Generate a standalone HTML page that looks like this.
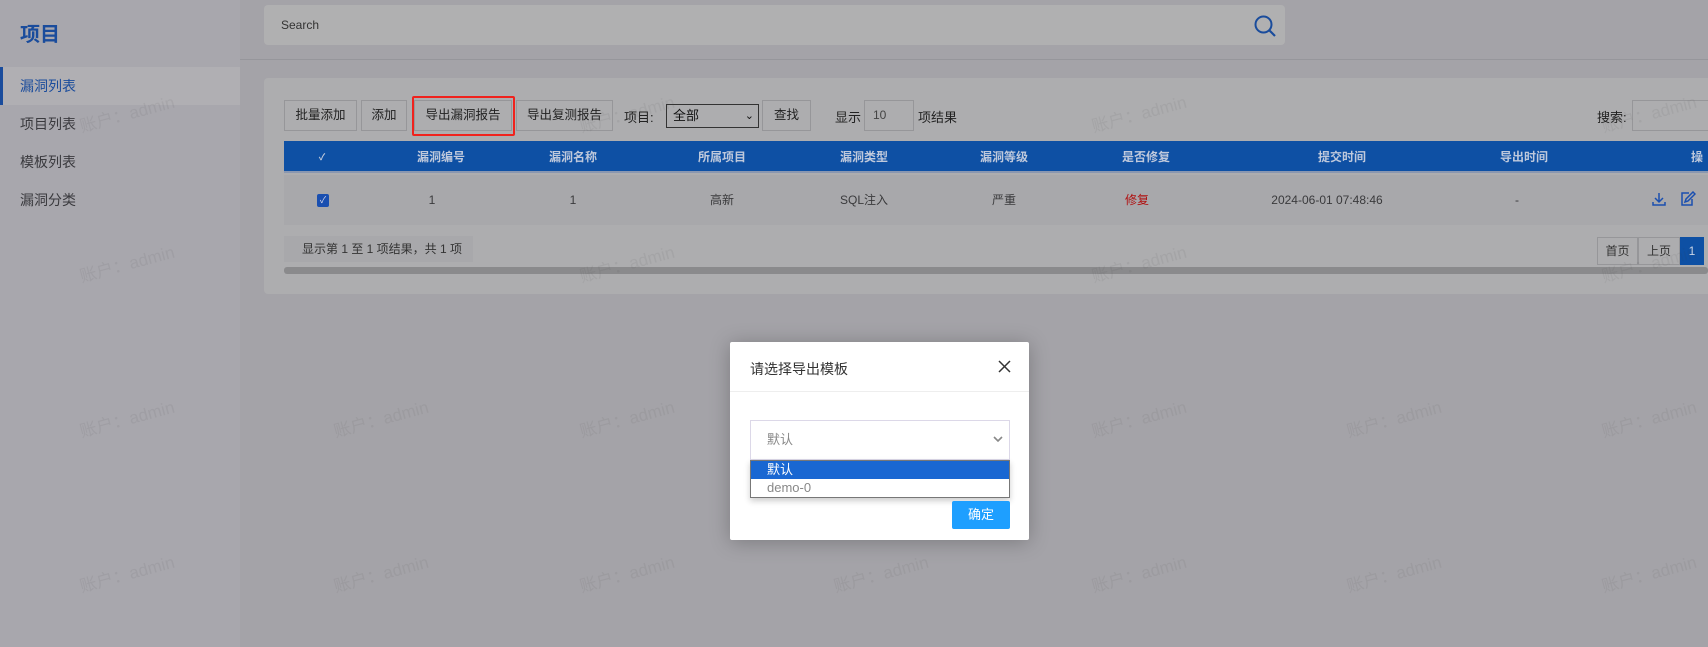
<!DOCTYPE html>
<html><head><meta charset="utf-8"><style>
*{box-sizing:border-box;margin:0;padding:0}
body{width:1708px;height:647px;overflow:hidden;background:#a4a3a8;font-family:"Liberation Sans","Noto Sans CJK SC",sans-serif;font-size:13px;color:#333;position:relative}
.side{position:absolute;left:0;top:0;width:240px;height:647px;background:#a8a7ad}
.title{position:absolute;left:20px;top:18px;font-size:20px;font-weight:bold;color:#1a4c9c}
.mi{position:absolute;left:0;width:240px;height:38px;line-height:38px;padding-left:20px;font-size:14px;color:#3a3a3e}
.mi.act{background:#b0afb3;color:#1a4c9c;border-left:3px solid #1a4c9c;padding-left:17px}
.search{position:absolute;left:264px;top:5px;width:1021px;height:40px;background:#b0b0b1;border-radius:4px;font-size:12px;line-height:40px;padding-left:17px;color:#333}
.hr{position:absolute;left:240px;top:59px;width:1468px;height:1px;background:#96969b}
.card{position:absolute;left:264px;top:78px;width:1450px;height:216px;background:#adadaf;border-radius:4px}
.btn{position:absolute;top:100px;height:31px;line-height:29px;border:1px solid #969699;background:#adadaf;text-align:center;font-size:12.5px;color:#222}
.thead{position:absolute;left:284px;top:141px;width:1424px;height:32px;background:#0e50a4;border-bottom:2px solid #8a97b0}
.th{position:absolute;top:0;line-height:32px;color:#bfc9dc;font-weight:bold;font-size:12px;transform:translateX(-50%)}
.row{position:absolute;left:284px;top:175px;width:1424px;height:50px;background:#a8a8ab}
.td{position:absolute;top:191px;height:18px;line-height:18px;font-size:12px;color:#3a3a3c;transform:translateX(-50%);white-space:nowrap}
.wm{position:absolute;color:rgba(60,60,70,0.08);font-size:17px;transform:rotate(-15deg);white-space:nowrap}
.modal{position:absolute;left:730px;top:342px;width:299px;height:198px;background:#fff;border-radius:2px;box-shadow:0 2px 20px rgba(0,0,0,.25)}
</style></head><body>
<div class="side">
<div class="title">项目</div>
<div class="mi act" style="top:67px">漏洞列表</div>
<div class="mi" style="top:105px">项目列表</div>
<div class="mi" style="top:143px">模板列表</div>
<div class="mi" style="top:181px">漏洞分类</div>
</div>
<div class="search">Search
<svg style="position:absolute;right:8px;top:9px" width="24" height="24" viewBox="0 0 24 24"><circle cx="10.5" cy="10.5" r="8" fill="none" stroke="#1a4c9c" stroke-width="2"/><path d="M16.5 16.5L22 22" stroke="#1a4c9c" stroke-width="2.2"/></svg></div>
<div class="hr"></div>
<div class="card"></div>
<div class="btn" style="left:284px;width:73px">批量添加</div>
<div class="btn" style="left:361px;width:46px">添加</div>
<div class="btn" style="left:414px;width:98px">导出漏洞报告</div>
<div style="position:absolute;left:412px;top:96px;width:103px;height:40px;border:2px solid #f0221d;border-radius:2px"></div>
<div class="btn" style="left:516px;width:97px">导出复测报告</div>
<div style="position:absolute;left:624px;top:107px;font-size:13px;color:#222">项目:</div>
<div style="position:absolute;left:666px;top:104px;width:93px;height:24px;border:1px solid #333;background:#adadaf;padding-left:6px;line-height:22px;font-size:13px;color:#111">全部<span style="position:absolute;right:4px;top:0;font-size:11px">&#8964;</span></div>
<div class="btn" style="left:762px;width:49px">查找</div>
<div style="position:absolute;left:835px;top:107px;color:#222">显示</div>
<div style="position:absolute;left:864px;top:100px;width:50px;height:31px;border:1px solid #969699;line-height:29px;padding-left:8px;font-size:12px;color:#444">10</div>
<div style="position:absolute;left:918px;top:107px;color:#222">项结果</div>
<div style="position:absolute;left:1597px;top:107px;color:#222">搜索:</div>
<div style="position:absolute;left:1632px;top:100px;width:80px;height:31px;border:1px solid #969699"></div>
<div class="thead">
<div class="th" style="left:38px;font-size:9px">✓</div>
<div class="th" style="left:157px">漏洞编号</div>
<div class="th" style="left:289px">漏洞名称</div>
<div class="th" style="left:438px">所属项目</div>
<div class="th" style="left:580px">漏洞类型</div>
<div class="th" style="left:720px">漏洞等级</div>
<div class="th" style="left:862px">是否修复</div>
<div class="th" style="left:1058px">提交时间</div>
<div class="th" style="left:1240px">导出时间</div>
<div class="th" style="left:1413px">操作</div>
</div>
<div class="row"></div>
<div style="position:absolute;left:317px;top:194px;width:12px;height:13px;background:#1a4fb0;border-radius:2px;color:#dde;font-size:9px;text-align:center;line-height:13px">✓</div>
<div class="td" style="left:432px">1</div>
<div class="td" style="left:573px">1</div>
<div class="td" style="left:722px">高新</div>
<div class="td" style="left:864px">SQL注入</div>
<div class="td" style="left:1004px">严重</div>
<div class="td" style="left:1137px;color:#b01010">修复</div>
<div class="td" style="left:1327px">2024-06-01 07:48:46</div>
<div class="td" style="left:1517px">-</div>
<svg style="position:absolute;left:1651px;top:191px" width="16" height="16" viewBox="0 0 16 16"><path d="M8 2v9M4 7l4 4 4-4M2 11v3h12v-3" fill="none" stroke="#1a4fb0" stroke-width="1.5"/></svg>
<svg style="position:absolute;left:1680px;top:191px" width="16" height="16" viewBox="0 0 16 16"><path d="M9 2H2v12h10V8M13 1l2 2-7 7-3 1 1-3z" fill="none" stroke="#1a4fb0" stroke-width="1.5"/></svg>
<div style="position:absolute;left:284px;top:236px;width:189px;height:26px;background:#a8a8ab;line-height:26px;padding-left:18px;font-size:12px;color:#333">显示第 1 至 1 项结果，共 1 项</div>
<div style="position:absolute;left:284px;top:267px;width:1424px;height:7px;background:#8a8a8c;border-radius:3px"></div>
<div style="position:absolute;left:1597px;top:237px;width:41px;height:28px;border:1px solid #969699;line-height:26px;text-align:center;font-size:12px">首页</div>
<div style="position:absolute;left:1638px;top:237px;width:42px;height:28px;border:1px solid #969699;line-height:26px;text-align:center;font-size:12px">上页</div>
<div style="position:absolute;left:1680px;top:237px;width:24px;height:28px;background:#0e50a4;line-height:28px;text-align:center;color:#c9d4e6;font-size:12px">1</div>
<div class="wm" style="left:78px;top:100px">账户：admin</div>
<div class="wm" style="left:578px;top:100px">账户：admin</div>
<div class="wm" style="left:1090px;top:100px">账户：admin</div>
<div class="wm" style="left:1600px;top:100px">账户：admin</div>
<div class="wm" style="left:78px;top:250px">账户：admin</div>
<div class="wm" style="left:578px;top:250px">账户：admin</div>
<div class="wm" style="left:1090px;top:250px">账户：admin</div>
<div class="wm" style="left:1600px;top:250px">账户：admin</div>
<div class="wm" style="left:78px;top:405px">账户：admin</div>
<div class="wm" style="left:332px;top:405px">账户：admin</div>
<div class="wm" style="left:578px;top:405px">账户：admin</div>
<div class="wm" style="left:1090px;top:405px">账户：admin</div>
<div class="wm" style="left:1345px;top:405px">账户：admin</div>
<div class="wm" style="left:1600px;top:405px">账户：admin</div>
<div class="wm" style="left:78px;top:560px">账户：admin</div>
<div class="wm" style="left:332px;top:560px">账户：admin</div>
<div class="wm" style="left:578px;top:560px">账户：admin</div>
<div class="wm" style="left:832px;top:560px">账户：admin</div>
<div class="wm" style="left:1090px;top:560px">账户：admin</div>
<div class="wm" style="left:1345px;top:560px">账户：admin</div>
<div class="wm" style="left:1600px;top:560px">账户：admin</div>
<div class="modal">
<div style="position:absolute;left:20px;top:17px;font-size:14px;color:#333">请选择导出模板</div>
<svg style="position:absolute;left:268px;top:18px" width="13" height="13" viewBox="0 0 13 13"><path d="M1 1l11 11M12 1L1 12" stroke="#333" stroke-width="1.5"/></svg>
<div style="position:absolute;left:0;top:49px;width:299px;height:1px;background:#eee"></div>
<div style="position:absolute;left:20px;top:78px;width:260px;height:40px;border:1px solid #dcd8e8;line-height:38px;padding-left:16px;font-size:13px;color:#888">默认<svg style="position:absolute;right:6px;top:15px" width="10" height="7" viewBox="0 0 10 7"><path d="M1 1l4 4 4-4" fill="none" stroke="#888" stroke-width="1.6"/></svg></div>
<div style="position:absolute;left:20px;top:118px;width:260px;height:38px;border:1px solid #777;background:#fff;box-shadow:0 3px 6px rgba(0,0,0,.2)">
<div style="height:18px;background:#1967d2;color:#fff;line-height:18px;padding-left:16px;font-size:13px">默认</div>
<div style="height:18px;color:#888;line-height:18px;padding-left:16px;font-size:13px">demo-0</div>
</div>
<div style="position:absolute;left:222px;top:159px;width:58px;height:28px;background:#1e9fff;border-radius:2px;color:#fff;text-align:center;line-height:28px;font-size:13px">确定</div>
</div>
</body></html>
